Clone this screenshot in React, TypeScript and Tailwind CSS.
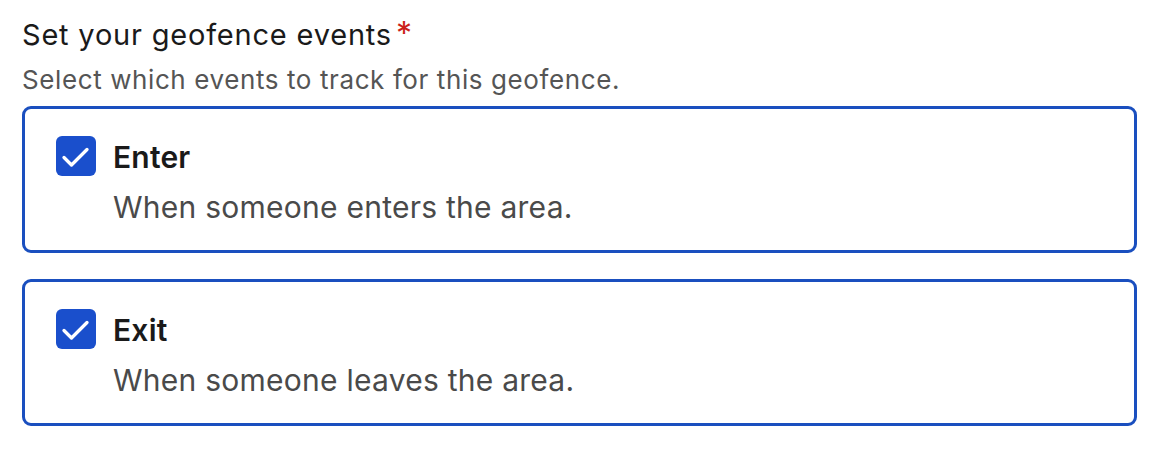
const events = [
  { label: 'Enter', description: 'When someone enters the area.' },
  { label: 'Exit', description: 'When someone leaves the area.' },
]

function CheckIcon() {
  return (
    <svg viewBox="0 0 40 40" className="w-[40px] h-[40px]" fill="none" stroke="white" strokeWidth="3.3" strokeLinecap="round" strokeLinejoin="round">
      <path d="M8 21.5l7.5 7.5L31 13.5" />
    </svg>
  )
}

export default function App() {
  return (
    <div className="min-h-screen bg-white px-[22px] pt-[17px] font-['Inter','Liberation_Sans',sans-serif]">
      <div className="flex items-start">
        <h2 className="text-[29px] leading-[36px] tracking-[0.8px] text-[#1a1a1a]">Set your geofence events</h2>
        <span className="ml-[4px] text-[32px] leading-[34px] text-[#cc1f1a]">*</span>
      </div>
      <p className="mt-[10px] text-[26px] leading-[34px] tracking-[0.6px] text-[#555555]">Select which events to track for this geofence.</p>
      <div className="mt-[9px] flex flex-col gap-[26px] w-[1115px]">
        {events.map((e) => (
          <label key={e.label} className="flex gap-[17px] rounded-[9px] border-[3px] border-[#1a4fbf] bg-white pl-[31px] pt-[27px] pb-[23px]">
            <span className="flex h-[40px] w-[40px] shrink-0 items-center justify-center rounded-[6px] bg-[#1a4fcc]">
              <CheckIcon />
            </span>
            <span className="flex flex-col">
              <span className="text-[30px] leading-[42px] font-semibold tracking-[0.2px] text-[#1a1a1a]">{e.label}</span>
              <span className="mt-[9px] text-[30px] leading-[40px] tracking-[0.25px] text-[#4a4a4a]">{e.description}</span>
            </span>
          </label>
        ))}
      </div>
    </div>
  )
}
